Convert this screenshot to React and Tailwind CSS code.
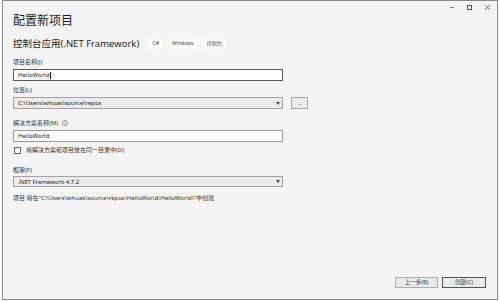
import React from 'react';

const font = "font-['Noto_Sans','Noto_Sans_CJK_SC',sans-serif]";

const Label = ({ children, className = '' }) => (
    <div className={`text-[6px] leading-[8px] text-[#333] ${className}`}>{children}</div>
);

const Arrow = () => (
    <svg width="4" height="3" viewBox="0 0 4 3" className="shrink-0">
        <path d="M0 0h4L2 3z" fill="#444" />
    </svg>
);

const Select = ({ value, className = '' }) => (
    <div className={`w-[270px] flex items-center justify-between border border-[#a2a2a2] bg-[#ebebeb] pl-[4px] pr-[2px] ${className}`}>
        <span className="text-[6px] leading-[8px] text-[#222]">{value}</span>
        <Arrow />
    </div>
);

const Tag = ({ children, w }) => (
    <div className={`${w} h-[10px] flex items-center justify-center bg-[#fdfdfd] text-[5px] text-[#444]`}>
        {children}
    </div>
);

export default function App() {
    return (
        <div className={`w-[500px] h-[301px] bg-white ${font}`}>
            <div className="ml-[2px] w-[496px] h-[300px] border border-[#8a8a8a] bg-[#f4f4f4] flex flex-col">
                {/* title bar buttons */}
                <div className="h-[12px] flex items-center justify-end pr-[7px] gap-[13px]">
                    <div className="w-[4px] h-px bg-[#777]" />
                    <div className="w-[5px] h-[5px] border border-[#555]" />
                    <svg width="5" height="5" viewBox="0 0 5 5">
                        <path d="M0.5 0.5l4 4M4.5 0.5l-4 4" stroke="#666" strokeWidth="0.8" />
                    </svg>
                </div>

                <div className="pl-[10px] flex flex-col">
                    <div className="mt-[1px] text-[12px] leading-[14px] text-[#1e1e1e]">配置新项目</div>

                    <div className="mt-[10px] h-[12px] flex items-center">
                        <span className="text-[9.5px] leading-[12px] text-[#1e1e1e]">控制台应用(.NET Framework)</span>
                        <div className="ml-[9px] flex gap-[4px]">
                            <Tag w="w-[15px]">C#</Tag>
                            <Tag w="w-[31px]">Windows</Tag>
                            <Tag w="w-[24px]">控制台</Tag>
                        </div>
                    </div>

                    <Label className="mt-[8px]">项目名称(J)</Label>
                    <div className="mt-[3px] w-[270px] h-[12px] border border-[#5a5a5a] bg-white flex items-center pl-[4px]">
                        <span className="text-[6px] leading-[8px] text-[#222]">HelloWorld</span>
                        <span className="ml-px w-px h-[7px] bg-[#222]" />
                    </div>

                    <Label className="mt-[5px]">位置(L)</Label>
                    <div className="mt-[3px] flex items-center gap-[8px]">
                        <Select value="C:\Users\whuas\source\repos" className="h-[12px]" />
                        <div className="w-[17px] h-[12px] border border-[#a8a8a8] bg-[#ececec] flex items-end justify-center pb-[2px]">
                            <span className="text-[5px] leading-[5px] text-[#444]">...</span>
                        </div>
                    </div>

                    <div className="mt-[10px] flex items-center gap-[4px]">
                        <Label>解决方案名称(M)</Label>
                        <svg width="6" height="6" viewBox="0 0 6 6">
                            <circle cx="3" cy="3" r="2.5" fill="none" stroke="#555" strokeWidth="0.6" />
                            <path d="M3 2.6v1.8" stroke="#555" strokeWidth="0.6" />
                            <circle cx="3" cy="1.7" r="0.35" fill="#555" />
                        </svg>
                    </div>
                    <div className="mt-[3px] w-[270px] h-[12px] border border-[#9a9a9a] bg-white flex items-center pl-[4px]">
                        <span className="text-[6px] leading-[8px] text-[#222]">HelloWorld</span>
                    </div>

                    <div className="mt-[4px] h-[8px] flex items-center gap-[5px] pl-px">
                        <div className="w-[7px] h-[7px] border border-[#666] bg-white" />
                        <Label>将解决方案和项目放在同一目录中(D)</Label>
                    </div>

                    <Label className="mt-[12px]">框架(F)</Label>
                    <Select value=".NET Framework 4.7.2" className="mt-[2px] h-[11px]" />

                    <Label className="mt-[7px]">项目 将在"C:\Users\whuas\source\repos\HelloWorld\HelloWorld\"中创建</Label>
                </div>

                <div className="mt-auto mb-[11px] pr-[11px] flex justify-end gap-[4px]">
                    <div className="w-[43px] h-[11px] border border-[#adadad] bg-[#e9e9e9] flex items-center justify-center">
                        <span className="text-[5.5px] leading-[7px] text-[#333]">上一步(B)</span>
                    </div>
                    <div className="w-[44px] h-[11px] border border-[#555] bg-[#e9e9e9] flex items-center justify-center">
                        <span className="text-[5.5px] leading-[7px] text-[#333]">创建(C)</span>
                    </div>
                </div>
            </div>
        </div>
    );
}
